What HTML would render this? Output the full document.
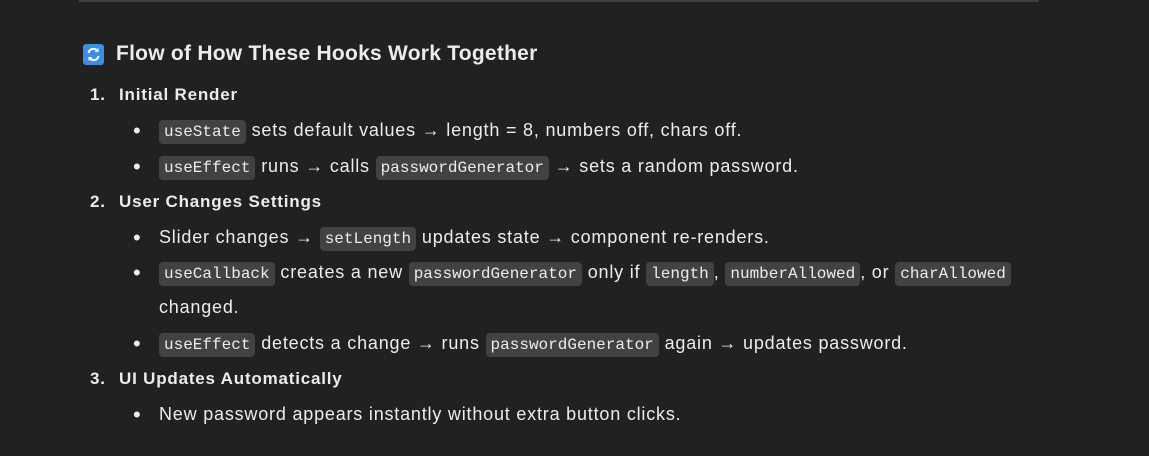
<!DOCTYPE html>
<html><head><meta charset="utf-8"><style>
body{margin:0;background:#212121;width:1149px;height:456px;overflow:hidden;position:relative;font-family:"Liberation Sans",sans-serif;color:#ececec;}
.hr{position:absolute;left:79px;top:0;width:960px;height:2px;background:#3e3e3e}
.l{position:absolute;white-space:nowrap;font-size:18px;line-height:24px;letter-spacing:0.8px}
.h{font-size:21px;font-weight:bold;left:116px;top:41px;line-height:26px;letter-spacing:0.25px}
.n{font-weight:bold;left:90px;font-size:17px;letter-spacing:0.8px}
.n b{display:inline-block;width:29px}
.b{left:133px}
.b i{display:inline-block;width:26px;font-style:normal;font-size:22px;vertical-align:-2px}
code{font-family:"Liberation Mono",monospace;font-size:16px;letter-spacing:0;background:#424242;border-radius:4px;padding:3px 5px;}
.ic{position:absolute;left:83px;top:44px;width:21px;height:21px;background:#3b8de8;border-radius:3px}
</style></head><body>
<div class="hr"></div>
<div class="ic"><svg width="21" height="21" viewBox="0 0 21 21"><path d="M5.5 9a5 5 0 0 1 9-2" stroke="#fff" stroke-width="2" fill="none"/><path d="M15.5 4v4h-4z" fill="#fff"/><path d="M15.5 12a5 5 0 0 1-9 2" stroke="#fff" stroke-width="2" fill="none"/><path d="M5.5 17v-4h4z" fill="#fff"/></svg></div>
<div class="l h">Flow of How These Hooks Work Together</div>
<div class="l n" style="top:83px"><b>1.</b>Initial Render</div>
<div class="l b" style="top:118px"><i>•</i><code>useState</code> sets default values → length = 8, numbers off, chars off.</div>
<div class="l b" style="top:154px"><i>•</i><code>useEffect</code> runs → calls <code>passwordGenerator</code> → sets a random password.</div>
<div class="l n" style="top:190px"><b>2.</b>User Changes Settings</div>
<div class="l b" style="top:225px"><i>•</i>Slider changes → <code>setLength</code> updates state → component re-renders.</div>
<div class="l b" style="top:260px"><i>•</i><code>useCallback</code> creates a new <code>passwordGenerator</code> only if <code>length</code>, <code>numberAllowed</code>, or <code>charAllowed</code></div>
<div class="l b" style="top:295px"><i></i>changed.</div>
<div class="l b" style="top:331px"><i>•</i><code>useEffect</code> detects a change → runs <code>passwordGenerator</code> again → updates password.</div>
<div class="l n" style="top:367px"><b>3.</b>UI Updates Automatically</div>
<div class="l b" style="top:402px"><i>•</i>New password appears instantly without extra button clicks.</div>
</body></html>
